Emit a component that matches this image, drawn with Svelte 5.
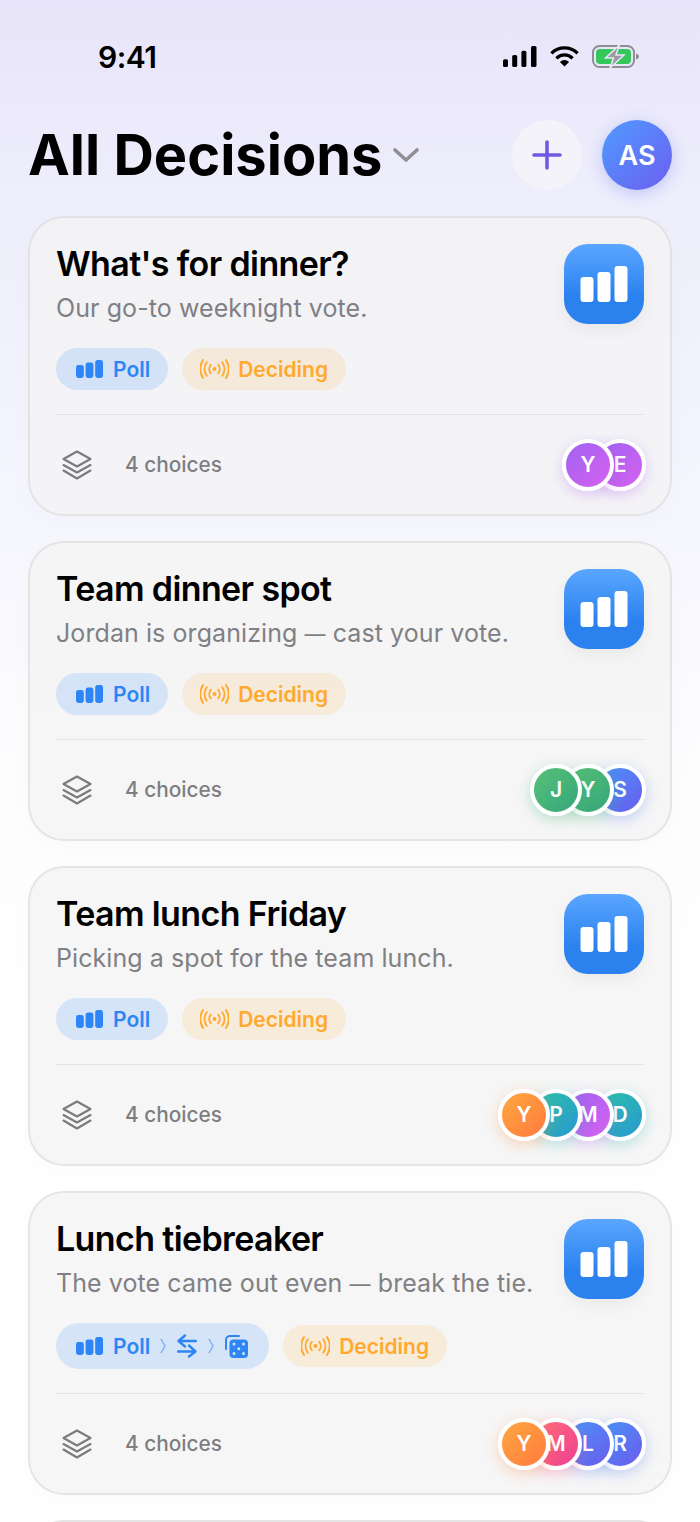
<script>
  const decisions = [
    {
      title: "What's for dinner?",
      sub: "Our go-to weeknight vote.",
      people: [
        ["Y", "purple"],
        ["E", "purple"],
      ],
    },
    {
      title: "Team dinner spot",
      sub: "Jordan is organizing — cast your vote.",
      people: [
        ["J", "green"],
        ["Y", "green"],
        ["S", "blue"],
      ],
    },
    {
      title: "Team lunch Friday",
      sub: "Picking a spot for the team lunch.",
      people: [
        ["Y", "orange"],
        ["P", "teal"],
        ["M", "purple"],
        ["D", "teal"],
      ],
    },
    {
      title: "Lunch tiebreaker",
      sub: "The vote came out even — break the tie.",
      chain: true,
      people: [
        ["Y", "orange"],
        ["M", "pink"],
        ["L", "blue"],
        ["R", "blue"],
      ],
    },
  ];
</script>

{#snippet bars()}
  <svg class="mini-bars" width="27" height="18" viewBox="0 0 27 18" fill="currentColor">
    <rect x="0" y="5" width="7.8" height="13" rx="2.4" />
    <rect x="9.6" y="2.5" width="7.8" height="15.5" rx="2.4" />
    <rect x="19.2" y="0" width="7.8" height="18" rx="2.4" />
  </svg>
{/snippet}

{#snippet signal()}
  <svg width="29" height="20" viewBox="0 0 29 20" fill="none" stroke="currentColor" stroke-width="1.9" stroke-linecap="round">
    <circle cx="14.5" cy="10" r="2" fill="currentColor" stroke="none" />
    <path d="M10.8 5.8a6.5 6.5 0 0 0 0 8.4M18.2 5.8a6.5 6.5 0 0 1 0 8.4" />
    <path d="M6.8 3.2a11.5 11.5 0 0 0 0 13.6M22.2 3.2a11.5 11.5 0 0 1 0 13.6" />
    <path d="M3 1a17 17 0 0 0 0 18M26 1a17 17 0 0 1 0 18" />
  </svg>
{/snippet}

{#snippet chevron()}
  <svg class="step" width="6" height="16" viewBox="0 0 6 16" fill="none" stroke="currentColor" stroke-width="1.3">
    <path d="M.8 .8 5 8 .8 15.2" />
  </svg>
{/snippet}

<div class="page">
  <div class="status">
    <span class="clock">9:41</span>
    <div class="status-icons">
      <svg width="34" height="21" viewBox="0 0 34 21" fill="#000">
        <rect x="0" y="13.3" width="5" height="7.7" rx="1.6" />
        <rect x="9.2" y="9" width="5" height="12" rx="1.6" />
        <rect x="18.4" y="4.7" width="5" height="16.3" rx="1.6" />
        <rect x="28" y="0" width="5.5" height="21" rx="1.6" />
      </svg>
      <svg width="29" height="21" viewBox="0 0 29 21" fill="none" stroke="#000" stroke-width="3.3">
        <path d="M1.4 7.4a18.5 18.5 0 0 1 26.2 0" />
        <path d="M6.4 12.3a11.4 11.4 0 0 1 16.2 0" />
        <path d="M14.5 20.6 9.9 16a6.5 6.5 0 0 1 9.2 0z" fill="#000" stroke="none" />
      </svg>
      <svg width="47" height="23" viewBox="0 0 47 23">
        <rect x="1" y="1" width="41" height="21" rx="6.5" fill="none" stroke="#8e8e93" stroke-width="2" />
        <rect x="4" y="4" width="35" height="15" rx="4" fill="#34c759" />
        <path d="M44 8.5c1.800.5 3 1.600 3 3s-1.200 2.500-3 3z" fill="#8e8e93" />
        <path d="M27.500 0 13.500 13h8l-3.500 10L32 10h-8z" fill="#9a9a9f" stroke="#e9e7f9" stroke-width="1.500" />
      </svg>
    </div>
  </div>

  <header>
    <h1>All Decisions</h1>
    <svg class="caret" width="28" height="16" viewBox="0 0 28 16" fill="none" stroke="#8e8e93" stroke-width="3.600" stroke-linecap="round" stroke-linejoin="round">
      <path d="M3 3l11 10L25 3" />
    </svg>
    <button class="add" aria-label="Add decision">
      <svg width="30" height="30" viewBox="0 0 30 30" stroke="#6f5ae6" stroke-width="3.600" stroke-linecap="round">
        <path d="M15 2v26M2 15h26" />
      </svg>
    </button>
    <div class="me">AS</div>
  </header>

  <div class="list">
    {#each decisions as item}
      <article class="card">
        <div class="top">
          <div class="copy">
            <h2>{item.title}</h2>
            <p>
              {#each item.sub.split("—") as part, i}
                {#if i > 0}<span class="dash">—</span>{/if}{part}
              {/each}
            </p>
            <div class="tags">
              <span class="tag poll" class:chain={item.chain}>
                {@render bars()}
                <span class="poll-label">Poll</span>
                {#if item.chain}
                  {@render chevron()}
                  <svg width="20" height="24" viewBox="0 0 20 24" fill="none" stroke="currentColor" stroke-width="2.400" stroke-linecap="round" stroke-linejoin="round">
                    <path d="M8 1.500 1.500 7 8 12.500M1.500 7H19M12 11.500l6.500 6-6.500 5M18.500 17.500H1" />
                  </svg>
                  {@render chevron()}
                  <svg width="23" height="23" viewBox="0 0 23 23">
                    <path d="M1 14V5a4 4 0 0 1 4-4h9" fill="none" stroke="currentColor" stroke-width="2" stroke-linecap="round" />
                    <rect x="4.500" y="4.500" width="18.500" height="18.500" rx="4" fill="currentColor" />
                    <g fill="#d6e4f4">
                      <circle cx="9" cy="9" r="1.500" />
                      <circle cx="18.500" cy="9" r="1.500" />
                      <circle cx="13.750" cy="13.750" r="1.500" />
                      <circle cx="9" cy="18.500" r="1.500" />
                      <circle cx="18.500" cy="18.500" r="1.500" />
                    </g>
                  </svg>
                {/if}
              </span>
              <span class="tag deciding">
                {@render signal()}
                <span>Deciding</span>
              </span>
            </div>
          </div>
          <div class="type-icon">
            <svg width="48" height="36" viewBox="0 0 48 36" fill="#fff">
              <rect x="0.500" y="11" width="13" height="25" rx="3" />
              <rect x="17.500" y="6" width="13" height="30" rx="3" />
              <rect x="34.500" y="0" width="13" height="36" rx="3" />
            </svg>
          </div>
        </div>
        <div class="foot">
          <svg class="layers" width="30" height="30" viewBox="0 0 30 30" fill="none" stroke="#7b7b7f" stroke-width="2.100" stroke-linejoin="round" stroke-linecap="round">
            <path d="M15 1.500 28.500 9 15 16.500 1.500 9z" />
            <path d="M1.500 15 15 22.500 28.500 15" />
            <path d="M1.500 20.500 15 28.500 28.500 20.500" />
          </svg>
          <span class="count">4 choices</span>
          <div class="people">
            {#each item.people as [initial, color], i}
              <span class={`face ${color}`} style="z-index: {10 - i}">{initial}</span>
            {/each}
          </div>
        </div>
      </article>
    {/each}
    <article class="card"></article>
  </div>
</div>

<style>
  :global(body) {
    margin: 0;
    background: #fff;
  }

  .page {
    height: 1522px;
    overflow: hidden;
    font-family: Inter, "Liberation Sans", sans-serif;
    background: linear-gradient(180deg, #e8e4f9 0, #eeeefc 200px, #f4f5fd 480px, #fcfcfe 720px, #fff 1000px);
  }

  .status {
    height: 120px;
    box-sizing: border-box;
    padding: 44px 61px 0 98px;
    display: flex;
    justify-content: space-between;
    align-items: flex-start;
  }

  .clock {
    font-size: 30px;
    line-height: 26px;
    font-weight: 600;
    letter-spacing: -0.5px;
    color: #000;
  }

  .status-icons {
    display: flex;
    align-items: center;
    gap: 13px;
    margin-top: 1px;
  }

  header {
    display: flex;
    align-items: center;
    height: 70px;
    padding: 0 28px;
    margin-bottom: 26px;
  }

  h1 {
    margin: 0;
    font-size: 56px;
    font-weight: 700;
    color: #000;
  }

  .caret {
    margin: 0 auto 0 10px;
  }

  .add {
    width: 70px;
    height: 70px;
    margin-right: 20px;
    padding: 0;
    border: none;
    border-radius: 50%;
    background: #f4f3fa;
    display: flex;
    align-items: center;
    justify-content: center;
  }

  .me {
    width: 70px;
    height: 70px;
    border-radius: 50%;
    display: flex;
    align-items: center;
    justify-content: center;
    font-size: 27px;
    font-weight: 600;
    color: #fff;
    background: linear-gradient(135deg, #4f9bff, #6c5ef0);
    box-shadow: 0 4px 16px rgba(90, 110, 240, 0.3);
  }

  .list {
    display: flex;
    flex-direction: column;
    gap: 25px;
    padding: 0 28px;
  }

  .card {
    box-sizing: border-box;
    min-height: 120px;
    border: 2px solid rgba(0, 0, 0, 0.07);
    border-radius: 36px;
    background: rgba(244, 244, 244, 0.8);
    padding: 26px 26px 0;
    box-shadow: 0 6px 24px rgba(0, 0, 0, 0.02);
  }

  .top {
    display: flex;
    justify-content: space-between;
    align-items: flex-start;
    padding-bottom: 24px;
    border-bottom: 1px solid rgba(0, 0, 0, 0.07);
  }

  .copy {
    min-width: 0;
  }

  h2 {
    margin: 0;
    font-size: 34px;
    line-height: 40px;
    font-weight: 600;
    letter-spacing: -0.62px;
    color: #000;
  }

  p {
    margin: 7px 0 23px;
    font-size: 25px;
    line-height: 34px;
    letter-spacing: 0.08px;
    color: #808084;
  }

  .dash {
    font-size: 21px;
    line-height: 0;
  }

  .tags {
    display: flex;
    align-items: center;
    gap: 14px;
  }

  .tag {
    height: 42px;
    box-sizing: border-box;
    padding: 0 18px 0 20px;
    border-radius: 23px;
    display: flex;
    align-items: center;
    font-size: 21px;
    font-weight: 600;
  }

  .poll {
    gap: 10px;
    color: #2e86f6;
    background: rgba(46, 134, 246, 0.16);
  }

  .poll.chain {
    height: 46px;
    padding-right: 21px;
    gap: 11px;
  }

  .chain .mini-bars {
    margin-right: -1px;
  }

  .chain .poll-label {
    margin-right: -1px;
  }

  .step {
    opacity: 0.55;
  }

  .deciding {
    gap: 9px;
    padding-left: 18px;
    color: #ffa92f;
    background: rgba(255, 169, 47, 0.14);
  }

  .type-icon {
    width: 80px;
    height: 80px;
    flex: none;
    border-radius: 24px;
    display: flex;
    align-items: center;
    justify-content: center;
    background: linear-gradient(180deg, #5aa6ff 0, #2b82ef 65%);
    box-shadow: 0 6px 16px rgba(0, 0, 0, 0.05);
  }

  .foot {
    height: 99px;
    display: flex;
    align-items: center;
  }

  .layers {
    margin-left: 6px;
  }

  .count {
    margin-left: 33px;
    font-size: 20.8px;
    font-weight: 500;
    color: #7e7e82;
  }

  .people {
    margin-left: auto;
    margin-right: -2px;
    display: flex;
  }

  .face {
    position: relative;
    width: 52px;
    height: 52px;
    box-sizing: border-box;
    border: 4px solid #fff;
    border-radius: 50%;
    display: flex;
    align-items: center;
    justify-content: center;
    font-size: 21px;
    font-weight: 600;
    color: #fff;
  }

  .face + .face {
    margin-left: -20px;
  }

  .orange {
    background: linear-gradient(135deg, #ffa83f, #ff7a3f);
    box-shadow: 0 4px 14px rgba(255, 130, 50, 0.3);
  }

  .purple {
    background: linear-gradient(135deg, #a062f2, #d662ee);
    box-shadow: 0 4px 14px rgba(170, 90, 240, 0.3);
  }

  .green {
    background: linear-gradient(135deg, #57c177, #36a67a);
    box-shadow: 0 4px 14px rgba(50, 170, 110, 0.3);
  }

  .teal {
    background: linear-gradient(135deg, #2cc4a6, #2a97d2);
    box-shadow: 0 4px 14px rgba(40, 180, 170, 0.3);
  }

  .blue {
    background: linear-gradient(135deg, #4a95f6, #6a5cee);
    box-shadow: 0 4px 14px rgba(80, 120, 240, 0.3);
  }

  .pink {
    background: linear-gradient(135deg, #ff6d78, #ef3f94);
    box-shadow: 0 4px 14px rgba(245, 70, 130, 0.3);
  }
</style>
